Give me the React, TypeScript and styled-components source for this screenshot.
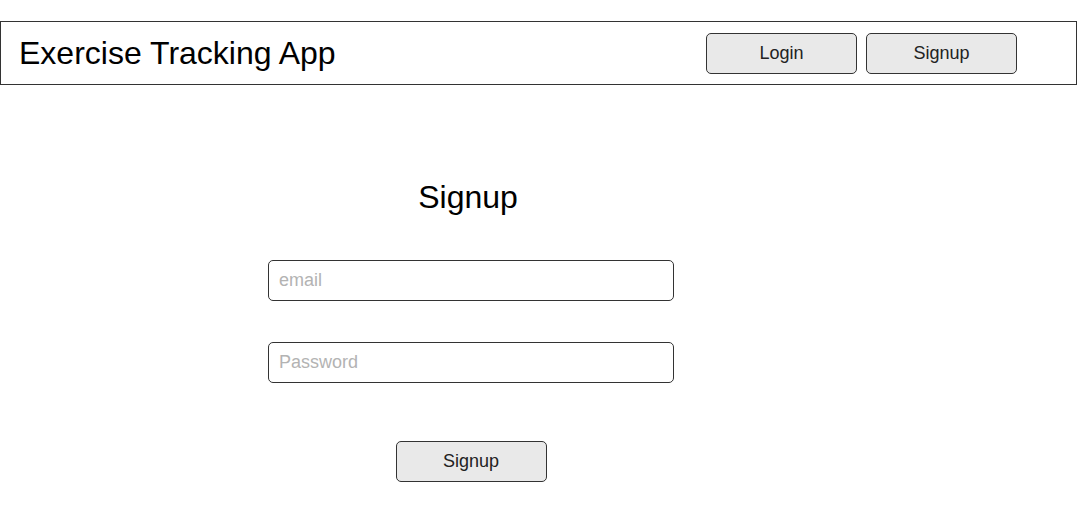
import styled, { createGlobalStyle } from 'styled-components'

const GlobalStyle = createGlobalStyle`
    body {
        margin: 0;
        background: #ffffff;
        font-family: Arial, "Liberation Sans", sans-serif;
    }
`

const Header = styled.header`
    margin-top: 21px;
    height: 64px;
    box-sizing: border-box;
    border: 1px solid #333333;
    display: flex;
    align-items: center;
    justify-content: space-between;
    padding: 0 59px 0 18px;
`

const Title = styled.h1`
    margin: 0;
    font-size: 32px;
    font-weight: normal;
    color: #000000;
`

const Nav = styled.nav`
    display: flex;
    gap: 9px;
`

const Button = styled.button`
    width: 151px;
    height: 41px;
    box-sizing: border-box;
    border: 1px solid #333333;
    border-radius: 5px;
    background: #e9e9e9;
    color: #222222;
    font-family: Arial, "Liberation Sans", sans-serif;
    font-size: 18px;
    cursor: pointer;
`

const Main = styled.main`
    padding: 94px 0 0 268px;
`

const Form = styled.form`
    width: 406px;
    display: flex;
    flex-direction: column;
    align-items: center;
`

const Heading = styled.h2`
    margin: 0 0 44px -6px;
    font-size: 32px;
    font-weight: normal;
    color: #000000;
`

const Input = styled.input`
    width: 406px;
    height: 41px;
    box-sizing: border-box;
    border: 1px solid #333333;
    border-radius: 5px;
    padding: 0 10px;
    margin-bottom: ${(p: { $last?: boolean }) => (p.$last ? '58px' : '41px')};
    font-family: Arial, "Liberation Sans", sans-serif;
    font-size: 18px;
    color: #222222;

    &::placeholder {
        color: #b3b3b3;
    }
`

export default function App() {
    return (
        <>
            <GlobalStyle />
            <Header>
                <Title>Exercise Tracking App</Title>
                <Nav>
                    <Button type="button">Login</Button>
                    <Button type="button">Signup</Button>
                </Nav>
            </Header>
            <Main>
                <Form onSubmit={(e) => e.preventDefault()}>
                    <Heading>Signup</Heading>
                    <Input type="email" placeholder="email" />
                    <Input type="password" placeholder="Password" $last />
                    <Button type="submit">Signup</Button>
                </Form>
            </Main>
        </>
    )
}
